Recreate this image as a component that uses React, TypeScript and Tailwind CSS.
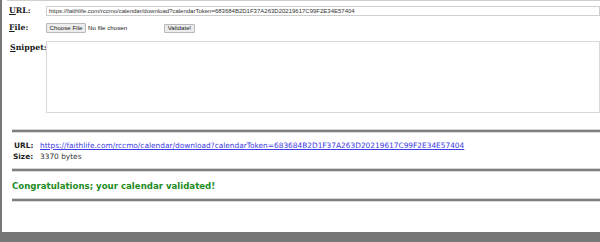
import React from "react";

const serif = { fontFamily: '"DejaVu Serif", Georgia, serif' };
const verdana = { fontFamily: '"DejaVu Sans", Verdana, sans-serif' };
const arial = { fontFamily: '"Liberation Sans", Arial, sans-serif' };

function Rule() {
  return (
    <div className="ml-[10px] flex flex-col">
      <div className="h-px bg-[#d4d4d4]" />
      <div className="h-[2px] bg-[#7f7f7f]" />
      <div className="h-px bg-[#dcdcdc]" />
    </div>
  );
}

export default function App() {
  return (
    <div className="w-[600px] h-[242px] flex flex-col overflow-hidden bg-[#777777]">
      <div className="flex-1 ml-[2px] bg-white flex flex-col overflow-hidden">
        <div className="ml-[5px] h-px bg-[#cfcfcf]" />
        {/* URL row */}
        <div className="flex items-center mt-[5px] h-[10px]">
          <div className="w-[44px] pl-[7px] text-[7.8px] font-bold text-[#1a1a1a]" style={serif}>
            <span className="underline">U</span>RL:
          </div>
          <div className="flex-1 h-[10px] border border-[#cfcfcf] flex items-center pl-[2px] text-[6px] text-[#333] whitespace-nowrap overflow-hidden" style={arial}>
            https://faithlife.com/rccmo/calendar/download?calendarToken=683684B2D1F37A263D20219617C99F2E34E57404
          </div>
        </div>
        {/* File row */}
        <div className="flex items-center mt-[7px] h-[10px]">
          <div className="w-[44px] pl-[7px] text-[7.8px] font-bold text-[#1a1a1a]" style={serif}>
            <span className="underline">F</span>ile:
          </div>
          <div className="h-[10px] w-[40px] border border-[#b8b8b8] bg-[#ececec] rounded-[1px] flex items-center justify-center text-[6.2px] text-[#222]" style={arial}>
            Choose File
          </div>
          <div className="ml-[2px] w-[76px] text-[6.2px] text-[#222]" style={arial}>No file chosen</div>
          <div className="h-[9px] w-[31px] border border-[#b8b8b8] bg-[#ececec] rounded-[1px] flex items-center justify-center text-[6.2px] text-[#222]" style={arial}>
            Validate!
          </div>
        </div>
        {/* Snippet */}
        <div className="flex mt-[8px]">
          <div className="w-[44px] pl-[8px] pt-[2px] text-[7.8px] font-bold text-[#1a1a1a] leading-[10px]" style={serif}>
            <span className="underline">S</span>nippet:
          </div>
          <div className="flex-1 h-[72px] border border-[#d8d8d8] bg-white" />
        </div>
        <div className="mt-[16px]">
          <Rule />
        </div>
        {/* Result */}
        <div className="mt-[8px] ml-[9px] grid grid-cols-[29px_1fr] gap-y-[1px] text-[7.4px] leading-[10px]" style={verdana}>
          <div className="font-bold text-[#222] pl-[3px]">URL:</div>
          <div>
            <a className="text-[#3c3ce6] underline" href="#">
              https://faithlife.com/rccmo/calendar/download?calendarToken=683684B2D1F37A263D20219617C99F2E34E57404
            </a>
          </div>
          <div className="font-bold text-[#222] pl-[2px]">Size:</div>
          <div className="text-[#333]">3370 bytes</div>
        </div>
        <div className="mt-[6px]">
          <Rule />
        </div>
        <div className="mt-[9px] ml-[10px] text-[8.6px] font-bold text-[#1e8c1e] leading-[10px]" style={verdana}>
          Congratulations; your calendar validated!
        </div>
        <div className="mt-[7px]">
          <Rule />
        </div>
      </div>
      <div className="h-[10px] bg-[#777777]" />
    </div>
  );
}
